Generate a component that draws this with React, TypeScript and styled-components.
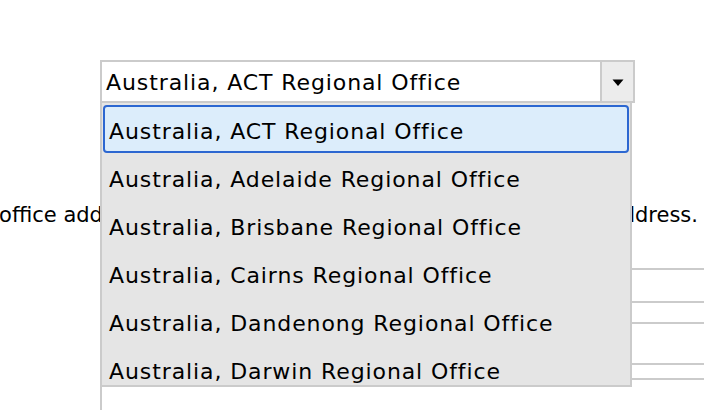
import styled, { createGlobalStyle } from "styled-components";

const GlobalStyle = createGlobalStyle`
  html, body {
    margin: 0;
    padding: 0;
    background: #ffffff;
  }
  body {
    font-family: "DejaVu Sans", "Liberation Sans", sans-serif;
    color: #000000;
  }
`;

const offices = [
  "Australia, ACT Regional Office",
  "Australia, Adelaide Regional Office",
  "Australia, Brisbane Regional Office",
  "Australia, Cairns Regional Office",
  "Australia, Dandenong Regional Office",
  "Australia, Darwin Regional Office",
  "Australia, Hobart Regional Office",
];

const App = () => {
  return (
    <>
      <GlobalStyle />
      <Page>
        <SelectWrap>
          <Select>
            <Value>{offices[0]}</Value>
            <ArrowButton>
              <svg width="12" height="8" viewBox="0 0 12 8">
                <path d="M0.5 0.5 L11.5 0.5 L6 7 Z" fill="#000" />
              </svg>
            </ArrowButton>
          </Select>
          <List>
            {offices.map((o, i) => (
              <Option key={o} $selected={i === 0}>
                {o}
              </Option>
            ))}
          </List>
        </SelectWrap>
        <Note>
          <span>
            Please choose the office address that is nearest to your residential or postal address.
          </span>
        </Note>
        <Input $h={35} $mt={41} />
        <Input $h={43} $mt={19} />
        <Input $h={44} $mt={13} />
      </Page>
    </>
  );
};

export default App;

const Page = styled.div`
  width: 704px;
  height: 410px;
  overflow: hidden;
  padding-top: 60px;
  box-sizing: border-box;
  display: flex;
  flex-direction: column;
`;

const SelectWrap = styled.div`
  position: relative;
  margin-left: 100px;
  width: 535px;
  z-index: 2;
`;

const Select = styled.div`
  height: 43px;
  box-sizing: border-box;
  border: 2px solid #cbcbcb;
  display: flex;
  align-items: stretch;
  background: #ffffff;
`;

const Value = styled.div`
  flex: 1;
  display: flex;
  align-items: center;
  padding: 2px 0 0 4px;
  font-size: 22px;
  letter-spacing: 0.9px;
  white-space: nowrap;
`;

const ArrowButton = styled.div`
  width: 31px;
  border-left: 2px solid #cbcbcb;
  background: #ececec;
  display: flex;
  align-items: center;
  justify-content: center;
  padding-top: 2px;
`;

const List = styled.div`
  position: absolute;
  top: 43px;
  left: 0;
  width: 532px;
  height: 284px;
  box-sizing: border-box;
  border: 2px solid #cbcbcb;
  border-top: none;
  background: #e5e5e5;
  overflow: hidden;
  padding: 2px 1px 0 1px;
`;

const Option = styled.div<{ $selected?: boolean }>`
  height: 48px;
  box-sizing: border-box;
  display: flex;
  align-items: center;
  padding: 4px 0 0 4px;
  font-size: 22px;
  letter-spacing: 0.9px;
  white-space: nowrap;
  border-radius: 4px;
  background: ${(p) => (p.$selected ? "#dcedfb" : "transparent")};
  border: 2px solid ${(p) => (p.$selected ? "#2c67d1" : "transparent")};
`;

const Note = styled.div`
  margin-top: 100px;
  height: 24px;
  display: flex;
  justify-content: flex-end;
  padding-right: 6px;
  font-size: 21px;
  line-height: 24px;
  white-space: nowrap;
`;

const Input = styled.div<{ $h: number; $mt: number }>`
  margin-left: 100px;
  margin-top: ${(p) => p.$mt}px;
  width: 800px;
  height: ${(p) => p.$h}px;
  flex-shrink: 0;
  box-sizing: border-box;
  border: 2px solid #cbcbcb;
  background: #ffffff;
`;
